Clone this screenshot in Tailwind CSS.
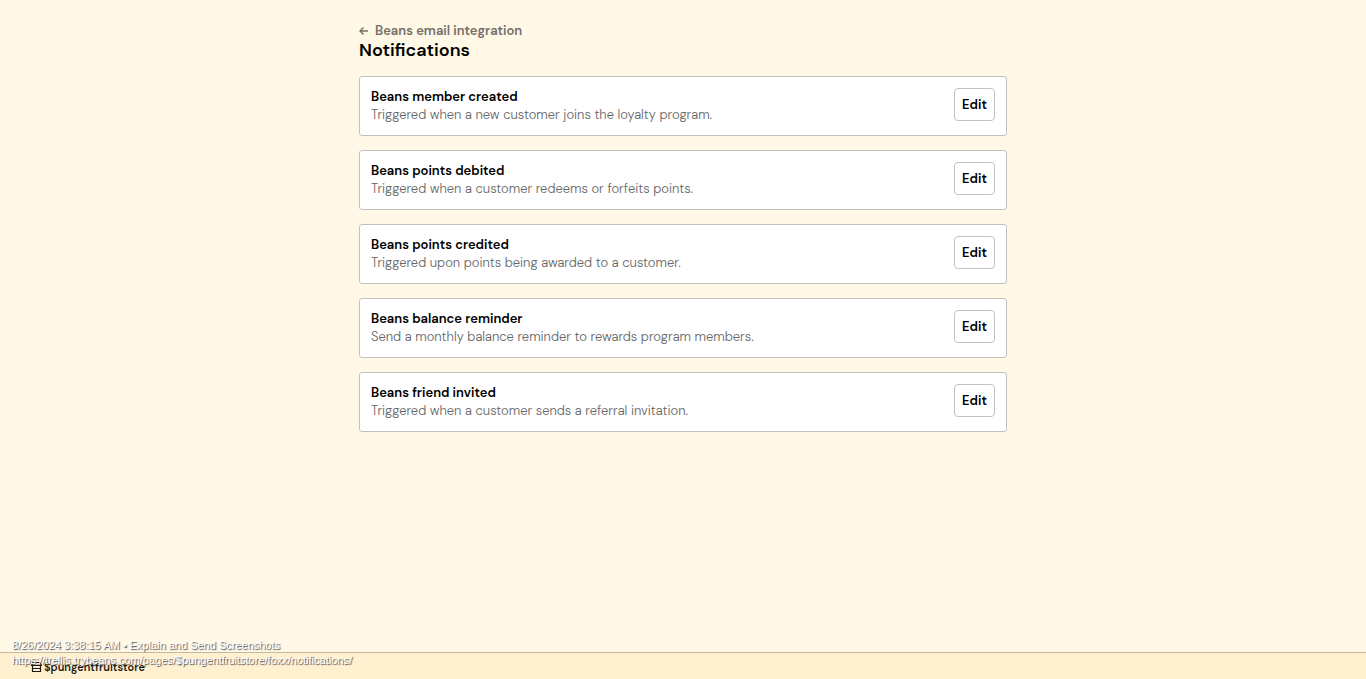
<!DOCTYPE html>
<html lang="en">
<head>
<meta charset="utf-8">
<meta name="viewport" content="width=device-width, initial-scale=1">
<title>Notifications</title>
<script src="https://cdn.jsdelivr.net/npm/@tailwindcss/browser@4"></script>
</head>
<body class="flex min-h-screen flex-col bg-[#fff8e7] font-['DM_Sans',Inter,sans-serif] text-black">
<main class="mx-auto w-full max-w-[648px] grow pt-[22px]">
  <a href="#" class="flex w-fit items-center gap-[7px] text-[13px] leading-[18px] font-semibold text-[#736f68]">
    <svg class="size-[9px]" viewBox="0 0 9 9" fill="none" stroke="currentColor" stroke-width="1.4" aria-hidden="true"><path d="M9 4H1M4.5 .5 1 4 4.5 7.5"/></svg>
    Beans email integration
  </a>
  <h1 class="text-[18px] leading-[20px] font-semibold">Notifications</h1>
  <ul class="mt-4 flex flex-col gap-[14px]">
    <li class="flex items-start justify-between rounded-[3px] border border-[#c2c2bf] bg-white p-[11px]">
      <div class="text-[13px] leading-[18px]"><h2 class="font-semibold">Beans member created</h2><p class="font-light text-[#666]">Triggered when a new customer joins the loyalty program.</p></div>
      <button type="button" aria-label="Edit Beans member created" class="h-[33px] w-[41px] rounded-[4px] border border-[#c2c2c2] text-[13px] font-semibold">Edit</button>
    </li>
    <li class="flex items-start justify-between rounded-[3px] border border-[#c2c2bf] bg-white p-[11px]">
      <div class="text-[13px] leading-[18px]"><h2 class="font-semibold">Beans points debited</h2><p class="font-light text-[#666]">Triggered when a customer redeems or forfeits points.</p></div>
      <button type="button" aria-label="Edit Beans points debited" class="h-[33px] w-[41px] rounded-[4px] border border-[#c2c2c2] text-[13px] font-semibold">Edit</button>
    </li>
    <li class="flex items-start justify-between rounded-[3px] border border-[#c2c2bf] bg-white p-[11px]">
      <div class="text-[13px] leading-[18px]"><h2 class="font-semibold">Beans points credited</h2><p class="font-light text-[#666]">Triggered upon points being awarded to a customer.</p></div>
      <button type="button" aria-label="Edit Beans points credited" class="h-[33px] w-[41px] rounded-[4px] border border-[#c2c2c2] text-[13px] font-semibold">Edit</button>
    </li>
    <li class="flex items-start justify-between rounded-[3px] border border-[#c2c2bf] bg-white p-[11px]">
      <div class="text-[13px] leading-[18px]"><h2 class="font-semibold">Beans balance reminder</h2><p class="font-light text-[#666]">Send a monthly balance reminder to rewards program members.</p></div>
      <button type="button" aria-label="Edit Beans balance reminder" class="h-[33px] w-[41px] rounded-[4px] border border-[#c2c2c2] text-[13px] font-semibold">Edit</button>
    </li>
    <li class="flex items-start justify-between rounded-[3px] border border-[#c2c2bf] bg-white p-[11px]">
      <div class="text-[13px] leading-[18px]"><h2 class="font-semibold">Beans friend invited</h2><p class="font-light text-[#666]">Triggered when a customer sends a referral invitation.</p></div>
      <button type="button" aria-label="Edit Beans friend invited" class="h-[33px] w-[41px] rounded-[4px] border border-[#c2c2c2] text-[13px] font-semibold">Edit</button>
    </li>
  </ul>
</main>
<footer class="border-t border-[#c2b99f] bg-[#fff0d0] px-[31px] pt-[5px] pb-[3px]">
  <a href="#" class="flex w-fit items-center gap-[2px] text-[11px] leading-[18px] font-semibold text-[#1c1a14]">
    <svg class="h-[10px] w-[11px]" viewBox="0 0 11 10" fill="none" stroke="currentColor" stroke-width="1.2" aria-hidden="true"><path d="M2 .5h7l1.5 3H.5zM1.5 3.5v6h8v-6M1.5 6.5h8"/></svg>
    $pungentfruitstore
  </a>
</footer>
<!-- Capture stamp over the page -->
<div class="pointer-events-none absolute bottom-[11px] left-3 font-['Liberation_Sans',Arial,sans-serif] text-[11px] leading-[15px] whitespace-nowrap text-white [text-shadow:1px_1px_1px_#444]">
  <p>8/26/2024 3:38:15 AM • Explain and Send Screenshots</p>
  <p>https://trellis.trybeans.com/pages/$pungentfruitstore/foxx/notifications/</p>
</div>
</body>
</html>
